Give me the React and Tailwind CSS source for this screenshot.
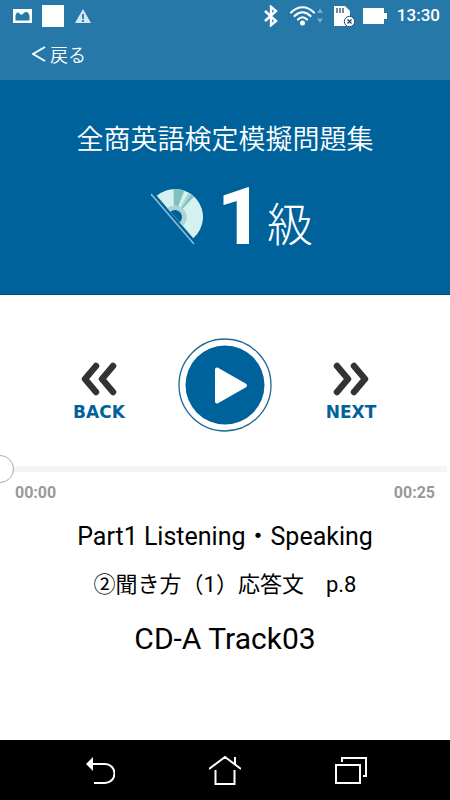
import React, { useState } from 'react';

const StatusBar = () => (
  <div className="flex h-8 items-center justify-between pl-3 pr-2.5 text-white">
    <div className="flex items-center gap-2.5">
      <svg className="h-4 w-5" viewBox="0 0 20 16">
        <rect x="1" y="1" width="19" height="14" fill="#fff" />
        <path d="M3.500 12.500V7.500C4 5 5.500 4 7 5c1.500 2 2.500 2 4 1 1-2 4-3 5.500-.5l1 2v5z" fill="#2578a8" />
      </svg>
      <div className="h-[22px] w-[22px] bg-white" />
      <svg className="ml-px h-4 w-4" viewBox="0 0 16 16">
        <path d="M8 1L16 15H0z" fill="#d3e8f5" />
        <path d="M8 6v5M8 12v2" stroke="#2578a8" strokeWidth="1.800" />
      </svg>
    </div>
    <div className="flex items-center">
      <svg className="mr-2.5 h-[22px] w-4" viewBox="0 0 16 22" fill="none" stroke="#fff" strokeWidth="2.400">
        <path d="M2 6l11 10-5 4.200V1.800L13 6 2 16" />
      </svg>
      <svg className="mr-2 h-6 w-9" viewBox="0 0 36 24">
        <g fill="none" stroke="#fff" strokeWidth="2.200" strokeLinecap="round">
          <path d="M2 8.500C9 1.500 18 1.500 25 8.500" />
          <path d="M5.500 12c5-5 11-5 16 0" />
          <path d="M9 15.500c3-3 6-3 9 0" />
        </g>
        <circle cx="13.500" cy="19" r="2.500" fill="#fff" />
        <path d="M28 9l3-4.500L34 9zM28 14.500h6L31 19z" fill="#7cadca" />
      </svg>
      <svg className="mr-2 h-[22px] w-[22px]" viewBox="0 0 22 22">
        <path d="M1 1h11l5 5v15H1z" fill="#fff" />
        <path d="M4 3v5M7 3v5M10 3v5" stroke="#1c4d70" strokeWidth="1.300" />
        <circle cx="16.500" cy="16.500" r="5.200" fill="#fff" stroke="#1c4d70" />
        <path d="M14.500 14.500l4 4M18.500 14.500l-4 4" stroke="#1c4d70" strokeWidth="1.400" />
      </svg>
      <svg className="mr-2.5 h-[18px] w-6" viewBox="0 0 24 18">
        <path d="M0 1h21v5h3v6h-3v5H0z" fill="#fff" />
      </svg>
      <span className="font-['Roboto',sans-serif] text-[17px] font-medium">13:30</span>
    </div>
  </div>
);

const Disc = () => (
  <svg className="mt-2 h-14 w-14" viewBox="0 0 56 56">
    <path d="M5.700 6.800A28 28 0 0 1 42.300 49.200z" fill="#d5f2f0" />
    <path d="M23 28L22.500 0q6-.2 11 1.600z" fill="#7fc1be" />
    <path d="M24 28L37.500 3.500l2 1.200z" fill="#a4d5d3" />
    <path d="M24 28L40 5l3 2.500z" fill="#7fc1be" />
    <path d="M16.200 18.900A12 12 0 0 1 31.800 37.100z" fill="#acd3d5" />
    <path d="M19.400 22.700A7 7 0 0 1 28.600 33.300z" fill="#00629b" />
    <path d="M0 5L43 55" stroke="#8fbcd6" strokeWidth="1.500" />
  </svg>
);

const SkipButton = ({ label, children }) => (
  <button type="button" className="flex w-16 flex-col items-center gap-[3px] pt-2">
    <svg
      className="h-9 w-9"
      viewBox="0 0 36 36"
      fill="none"
      stroke="#333"
      strokeWidth="6.500"
      strokeLinecap="round"
      strokeLinejoin="round"
    >
      {children}
    </svg>
    <span className="font-['DejaVu_Sans',sans-serif] text-[17px] leading-6 font-bold text-[#00629b]">{label}</span>
  </button>
);

const App = () => {
  const [position, setPosition] = useState(0);

  return (
    <div className="flex min-h-screen flex-col bg-white font-['Roboto','Noto_Sans_CJK_JP',sans-serif]">
      <header className="bg-[#2578a8]">
        <StatusBar />
        <nav className="flex h-12 items-start pl-8">
          <a href="#back" className="flex items-center gap-1 pt-2 font-['Noto_Sans_CJK_JP',sans-serif] text-lg leading-7 font-[350] text-white">
            <svg className="h-4 w-3.5" viewBox="0 0 14 16" fill="none" stroke="#fff" strokeWidth="2">
              <path d="M13 1L1 8l12 7" />
            </svg>
            戻る
          </a>
        </nav>
      </header>

      <section className="flex flex-col items-center border-b border-[#084a73] bg-[#00629b] pt-10 pb-9 font-['Noto_Sans_CJK_JP',sans-serif] text-white">
        <h1 className="text-[27px] leading-9 font-[350]">全商英語検定模擬問題集</h1>
        <div className="mt-3 flex h-[90px] items-center pl-3.5">
          <Disc />
          <span className="ml-2.5 pt-2 font-['Roboto',sans-serif] text-[80px] leading-none font-extrabold">1</span>
          <span className="ml-1 pt-4 text-[46px] leading-none font-light">級</span>
        </div>
      </section>

      <main className="flex flex-1 flex-col">
        <div className="flex items-start justify-center gap-[46px] pt-[42px]">
          <div className="pt-4">
            <SkipButton label="BACK">
              <path d="M15 5L4 18l11 13M32 5L21 18l11 13" />
            </SkipButton>
          </div>
          <button type="button" aria-label="Play">
            <svg className="h-24 w-24" viewBox="0 0 96 96">
              <circle cx="48" cy="48" r="46" fill="#fff" stroke="#1f6794" strokeWidth="1.300" />
              <circle cx="48" cy="48" r="39.500" fill="#00629b" />
              <path d="M40 32.500L68 48.500 40 64.500z" fill="#fff" stroke="#fff" strokeWidth="4" strokeLinejoin="round" />
            </svg>
          </button>
          <div className="pt-4">
            <SkipButton label="NEXT">
              <path d="M4 5l11 13L4 31M21 5l11 13-11 13" />
            </SkipButton>
          </div>
        </div>

        <div className="mt-[22px] flex overflow-hidden pr-[3px]">
          <input
            type="range"
            min="0"
            max="25"
            value={position}
            onChange={(e) => setPosition(Number(e.target.value))}
            aria-label="Position"
            className="-ml-3.5 h-7 min-w-0 flex-1 appearance-none bg-transparent [&::-webkit-slider-runnable-track]:h-1.5 [&::-webkit-slider-runnable-track]:bg-[#f4f4f4] [&::-webkit-slider-thumb]:-mt-[11px] [&::-webkit-slider-thumb]:h-7 [&::-webkit-slider-thumb]:w-7 [&::-webkit-slider-thumb]:appearance-none [&::-webkit-slider-thumb]:rounded-full [&::-webkit-slider-thumb]:border [&::-webkit-slider-thumb]:border-[#aaa] [&::-webkit-slider-thumb]:bg-white"
          />
        </div>
        <div className="flex justify-between px-[15px] text-base leading-5 font-bold text-[#999]">
          <span>00:00</span>
          <span>00:25</span>
        </div>

        <div className="mt-3.5 flex flex-col items-center text-black">
          <p className="text-[25px] leading-10">Part1 Listening・Speaking</p>
          <p className="mt-2 text-[22px] leading-10">②聞き方（1）応答文　p.8</p>
          <p className="mt-3.5 text-3xl leading-10">CD-A Track03</p>
        </div>
      </main>

      <footer className="flex h-[60px] items-center justify-around bg-black px-9">
        <button type="button" aria-label="Back">
          <svg className="h-8 w-8" viewBox="0 0 32 32">
            <path d="M9 10h13a9.500 9.500 0 0 1 0 19H11" fill="none" stroke="#fff" strokeWidth="2" />
            <path d="M3 10l7-7v14z" fill="#fff" />
          </svg>
        </button>
        <button type="button" aria-label="Home">
          <svg className="h-8 w-8" viewBox="0 0 32 32" fill="none" stroke="#fff" strokeWidth="2">
            <path d="M0 15L16 3l16 12M26 10V3M6.500 16v14h19V16" />
          </svg>
        </button>
        <button type="button" aria-label="Recent apps">
          <svg className="h-8 w-8" viewBox="0 0 32 32" fill="none" stroke="#fff" strokeWidth="2">
            <path d="M1 11h24v18H1zM7 8V4h24v18h-3" />
          </svg>
        </button>
      </footer>
    </div>
  );
};

export default App;
